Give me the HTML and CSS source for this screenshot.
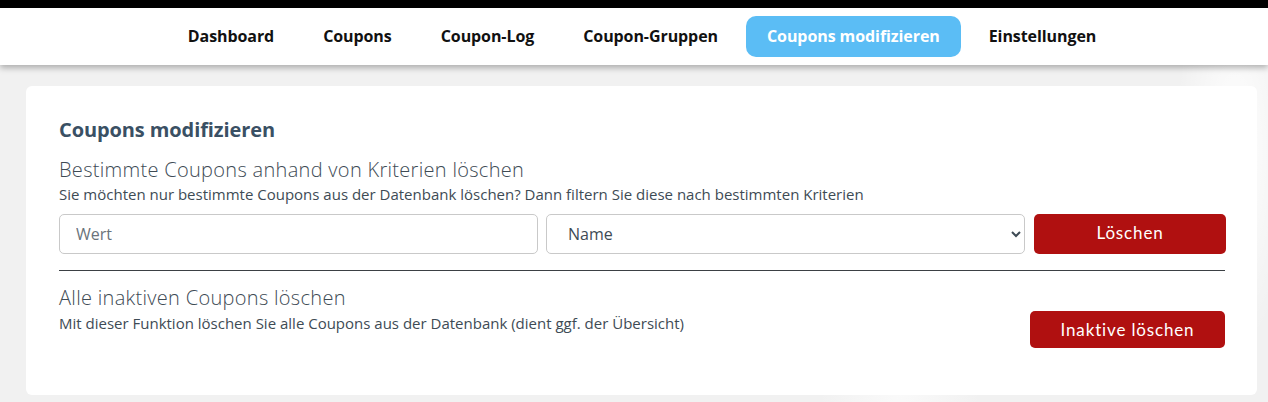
FILE: index.html
```html
<!DOCTYPE html>
<html lang="de">
<head>
<meta charset="utf-8">
<title>Coupons modifizieren</title>
<link rel="stylesheet" href="styles.css">
</head>
<body>
<div class="topbar"></div>
<nav class="nav">
  <a class="nav-item">Dashboard</a>
  <a class="nav-item">Coupons</a>
  <a class="nav-item">Coupon-Log</a>
  <a class="nav-item">Coupon-Gruppen</a>
  <a class="nav-item active">Coupons modifizieren</a>
  <a class="nav-item">Einstellungen</a>
</nav>
<main class="main">
  <section class="card">
    <h1 class="title">Coupons modifizieren</h1>
    <h2 class="subtitle">Bestimmte Coupons anhand von Kriterien löschen</h2>
    <p class="desc">Sie möchten nur bestimmte Coupons aus der Datenbank löschen? Dann filtern Sie diese nach bestimmten Kriterien</p>
    <div class="filter-row">
      <input class="field" type="text" placeholder="Wert">
      <select class="field select">
        <option>Name</option>
      </select>
      <button class="btn btn-del">Löschen</button>
    </div>
    <hr class="divider">
    <div class="inactive-row">
      <div class="inactive-text">
        <h2 class="subtitle second">Alle inaktiven Coupons löschen</h2>
        <p class="desc second-desc">Mit dieser Funktion löschen Sie alle Coupons aus der Datenbank (dient ggf. der Übersicht)</p>
      </div>
      <button class="btn btn-inactive">Inaktive löschen</button>
    </div>
  </section>
</main>
</body>
</html>
```

FILE: styles.css
```css
* { box-sizing: border-box; }
html, body { margin: 0; padding: 0; }
body {
  font-family: "Open Sans", "Noto Sans", sans-serif;
  background: #f1f1f1;
  background-image:
    radial-gradient(ellipse 60px 200px at 1235px 150px, #ffffff 0%, rgba(255,255,255,0) 100%),
    radial-gradient(ellipse 80px 200px at 900px 380px, #fafafa 0%, rgba(255,255,255,0) 100%);
  height: 402px;
  overflow: hidden;
}
.topbar { height: 8px; background: #000; }
.nav {
  height: 57px;
  background: #fff;
  display: flex;
  justify-content: center;
  align-items: center;
  gap: 7px;
  padding-left: 16px;
  box-shadow: 0 3px 6px rgba(0,0,0,0.28);
  position: relative;
  z-index: 1;
}
.nav-item {
  font-weight: 700;
  font-size: 16px;
  color: #111;
  padding: 0 21px;
  height: 41px;
  line-height: 40px;
  border-radius: 10px;
  letter-spacing: -0.08px;
}
.nav-item.active {
  background: #5bbdf5;
  color: #fff;
}
.main { padding: 21px 11px 0 26px; }
.card {
  background: #fff;
  border-radius: 6px;
  padding: 30px 32px 40px 33px;
  height: 309px;
}
.title {
  margin: 0;
  font-size: 20px;
  font-weight: 700;
  color: #3a5064;
  line-height: 28px;
  letter-spacing: -0.1px;
}
.subtitle {
  margin: 13px 0 0;
  font-size: 20px;
  font-weight: 300;
  color: #3e4b55;
  line-height: 26px;
  letter-spacing: 0.3px;
}
.subtitle.second { margin-top: 0; }
.desc {
  margin: 0;
  font-size: 15px;
  font-weight: 400;
  color: #3e4b55;
  line-height: 22px;
}
.desc.second-desc { margin-top: 1px; }
.filter-row {
  display: flex;
  gap: 8px;
  margin-top: 9px;
}
.field {
  flex: 0 0 479px;
  height: 40px;
  border: 1px solid #c9c9c9;
  border-radius: 5px;
  padding: 0 16px;
  font-family: "Open Sans", sans-serif;
  font-size: 16px;
  color: #333;
  background: #fff;
}
.field::placeholder { color: #6a737b; }
.select { padding: 0 17px; color: #3e4b55; }
.btn {
  border: none;
  border-radius: 5px;
  background: #b01010;
  color: #fff;
  font-family: "Lato", "Noto Sans", sans-serif;
  font-size: 17px;
  letter-spacing: 0.85px;
}
.btn-del {
  flex: 0 0 192px;
  height: 40px;
  margin-left: 1px;
  padding-bottom: 4px;
}
.divider {
  border: none;
  border-top: 1px solid #3b4044;
  margin: 16px 0 0;
}
.inactive-row {
  display: flex;
  justify-content: space-between;
  align-items: flex-start;
  margin-top: 14px;
}
.btn-inactive {
  width: 195px;
  height: 37px;
  margin-top: 26px;
  padding-bottom: 2px;
}
```
